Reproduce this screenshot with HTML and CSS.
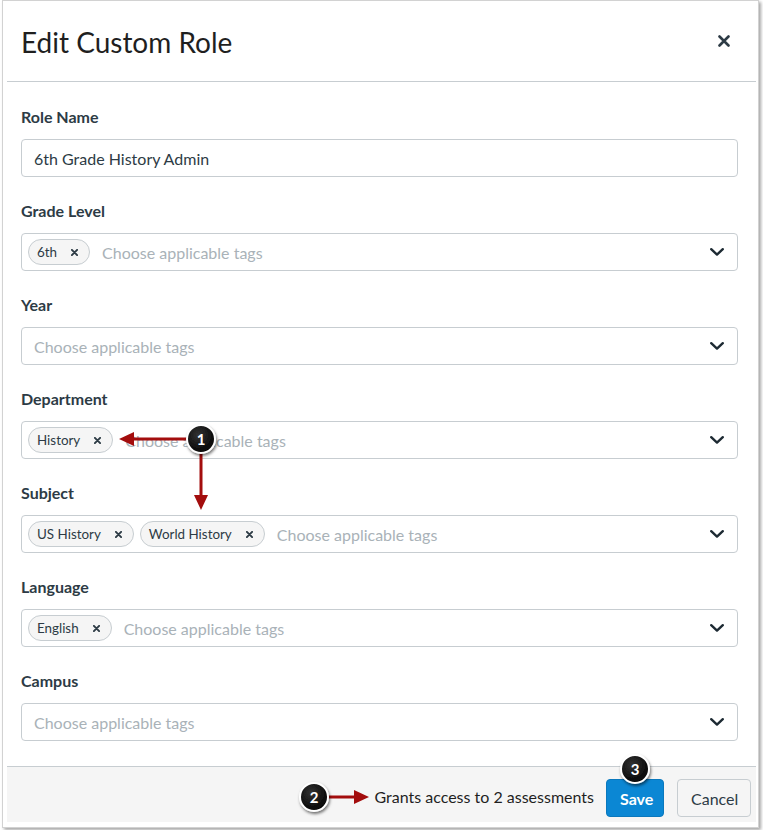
FILE: index.html
```html
<!DOCTYPE html>
<html lang="en">
<head>
<meta charset="utf-8">
<title>Edit Custom Role</title>
<link rel="stylesheet" href="styles.css">
</head>
<body>
<div class="frame">
  <header class="header">
    <h1 class="title">Edit Custom Role</h1>
    <button class="close" aria-label="Close">
      <svg width="12" height="12" viewBox="0 0 12 12"><path d="M1.5 1.5 L10.5 10.5 M10.5 1.5 L1.5 10.5" stroke="#2d3b45" stroke-width="2.6" stroke-linecap="round"/></svg>
    </button>
  </header>
  <main class="body">
    <div class="field">
      <label class="label">Role Name</label>
      <div class="input"><span class="value">6th Grade History Admin</span></div>
    </div>
    <div class="field">
      <label class="label">Grade Level</label>
      <div class="input select">
        <div class="tags">
          <span class="chip">6th<svg class="x" viewBox="0 0 8 8"><path d="M1 1L7 7M7 1L1 7"/></svg></span>
          <span class="ph">Choose applicable tags</span>
        </div>
        <svg class="chev" viewBox="0 0 14 8"><path d="M1.2 1.2 L7 6.6 L12.8 1.2"/></svg>
      </div>
    </div>
    <div class="field">
      <label class="label">Year</label>
      <div class="input select">
        <div class="tags"><span class="ph first">Choose applicable tags</span></div>
        <svg class="chev" viewBox="0 0 14 8"><path d="M1.2 1.2 L7 6.6 L12.8 1.2"/></svg>
      </div>
    </div>
    <div class="field">
      <label class="label">Department</label>
      <div class="input select">
        <div class="tags">
          <span class="chip">History<svg class="x" viewBox="0 0 8 8"><path d="M1 1L7 7M7 1L1 7"/></svg></span>
          <span class="ph">Choose applicable tags</span>
        </div>
        <svg class="chev" viewBox="0 0 14 8"><path d="M1.2 1.2 L7 6.6 L12.8 1.2"/></svg>
      </div>
    </div>
    <div class="field">
      <label class="label">Subject</label>
      <div class="input select">
        <div class="tags">
          <span class="chip">US History<svg class="x" viewBox="0 0 8 8"><path d="M1 1L7 7M7 1L1 7"/></svg></span>
          <span class="chip">World History<svg class="x" viewBox="0 0 8 8"><path d="M1 1L7 7M7 1L1 7"/></svg></span>
          <span class="ph">Choose applicable tags</span>
        </div>
        <svg class="chev" viewBox="0 0 14 8"><path d="M1.2 1.2 L7 6.6 L12.8 1.2"/></svg>
      </div>
    </div>
    <div class="field">
      <label class="label">Language</label>
      <div class="input select">
        <div class="tags">
          <span class="chip">English<svg class="x" viewBox="0 0 8 8"><path d="M1 1L7 7M7 1L1 7"/></svg></span>
          <span class="ph">Choose applicable tags</span>
        </div>
        <svg class="chev" viewBox="0 0 14 8"><path d="M1.2 1.2 L7 6.6 L12.8 1.2"/></svg>
      </div>
    </div>
    <div class="field">
      <label class="label">Campus</label>
      <div class="input select">
        <div class="tags"><span class="ph first">Choose applicable tags</span></div>
        <svg class="chev" viewBox="0 0 14 8"><path d="M1.2 1.2 L7 6.6 L12.8 1.2"/></svg>
      </div>
    </div>
  </main>
  <footer class="footer">
    <span class="grants">Grants access to 2 assessments</span>
    <button class="btn primary">Save</button>
    <button class="btn secondary">Cancel</button>
  </footer>
</div>

<svg class="annotations" width="763" height="830" viewBox="0 0 763 830">
  <defs>
    <filter id="sh" x="-50%" y="-50%" width="200%" height="200%">
      <feDropShadow dx="1" dy="2" stdDeviation="1.6" flood-color="#000" flood-opacity="0.55"/>
    </filter>
    <radialGradient id="bg" cx="40%" cy="35%" r="70%">
      <stop offset="0" stop-color="#333"/>
      <stop offset="1" stop-color="#000"/>
    </radialGradient>
  </defs>
  <g stroke="#a30d0d" stroke-width="3" fill="#a30d0d">
    <line x1="190" y1="439" x2="132" y2="439"/>
    <polygon points="119,439 134,432 134,446" stroke="none"/>
    <line x1="201" y1="450" x2="201" y2="496"/>
    <polygon points="201,510 194,495 208,495" stroke="none"/>
    <line x1="325" y1="797" x2="356" y2="797"/>
    <polygon points="369,797 354,790 354,804" stroke="none"/>
  </g>
  <g filter="url(#sh)">
    <circle cx="201" cy="439" r="14" fill="url(#bg)" stroke="#fff" stroke-width="2"/>
    <circle cx="314" cy="797" r="14" fill="url(#bg)" stroke="#fff" stroke-width="2"/>
    <circle cx="635" cy="769" r="14" fill="url(#bg)" stroke="#fff" stroke-width="2"/>
  </g>
  <g class="num">
    <text x="201" y="444.5">1</text>
    <text x="314" y="802.5">2</text>
    <text x="635" y="774.5">3</text>
  </g>
</svg>
</body>
</html>
```

FILE: styles.css
```css
* { box-sizing: border-box; }

html, body {
  margin: 0;
  padding: 0;
  background: #fff;
}

body {
  font-family: Lato, "Open Sans", Arial, sans-serif;
  color: #2d3b45;
  width: 763px;
  height: 830px;
  position: relative;
  overflow: hidden;
}

.frame {
  margin-left: 2px;
  width: 757px;
  height: 828px;
  border: 1px solid #d2d2d2;
  padding: 0 2px 5px 4px;
  box-shadow: 2px 2px 3px rgba(0, 0, 0, 0.35);
  display: flex;
  flex-direction: column;
  background: #fff;
}

.header {
  height: 81px;
  border-bottom: 1px solid #c7cdd1;
  display: flex;
  align-items: center;
  justify-content: space-between;
  padding: 0 26px 0 14px;
  flex: none;
}

.title {
  margin: 0;
  font-size: 28px;
  font-weight: 400;
  color: #1f1f1f;
  letter-spacing: 0;
  padding-top: 2px;
}

.close {
  border: 0;
  background: none;
  padding: 0;
  width: 12px;
  height: 12px;
  display: flex;
  margin-top: 0;
}

.body {
  flex: 1;
  padding: 23px 18px 25px 14px;
  display: flex;
  flex-direction: column;
  gap: 22px;
}

.field {
  display: flex;
  flex-direction: column;
}

.label {
  font-size: 16px;
  font-weight: 700;
  line-height: 24px;
  height: 24px;
  margin-bottom: 10px;
  color: #2d3b45;
}

.input {
  height: 38px;
  border: 1px solid #c7cdd1;
  border-radius: 4px;
  display: flex;
  align-items: center;
  padding: 0 12px;
  font-size: 16px;
}

.value {
  color: #2d3b45;
}

.select {
  padding: 0 13px 0 6px;
  justify-content: space-between;
}

.tags {
  display: flex;
  align-items: center;
  gap: 6px;
}

.chip {
  height: 26px;
  border: 1px solid #c7cdd1;
  background: #f5f5f5;
  border-radius: 13px;
  display: inline-flex;
  align-items: center;
  padding: 0 11px 0 8px;
  font-size: 13.4px;
  color: #2d3b45;
}

.x {
  width: 7px;
  height: 7px;
  margin-left: 14px;
  stroke: #2d3b45;
  stroke-width: 2.2;
  stroke-linecap: round;
  fill: none;
}

.ph {
  color: #a9b2b8;
  font-size: 16px;
  margin-left: 6px;
}

.ph.first {
  margin-left: 6px;
}

.chev {
  width: 14px;
  height: 8px;
  stroke: #1d2a33;
  stroke-width: 2.4;
  stroke-linecap: round;
  stroke-linejoin: round;
  fill: none;
}

.footer {
  flex: none;
  height: 56px;
  border-top: 1px solid #c7cdd1;
  background: #f5f5f5;
  display: flex;
  justify-content: flex-end;
  align-items: flex-start;
  padding: 12px 5px 0 0;
}

.grants {
  font-size: 16px;
  line-height: 36px;
  color: #1f1f1f;
  margin-right: 12px;
}

.btn {
  height: 38px;
  font-family: Lato, "Open Sans", Arial, sans-serif;
  font-size: 16px;
  border-radius: 4px;
  padding: 0 13px;
}

.primary {
  background: #0b87d4;
  border: 1px solid #0a78bd;
  color: #fff;
  font-weight: 700;
  width: 58px;
}

.secondary {
  background: #f5f5f5;
  border: 1px solid #c7cdd1;
  color: #2d3b45;
  margin-left: 13px;
  width: 74px;
}

.annotations {
  position: absolute;
  left: 0;
  top: 0;
  pointer-events: none;
}

.num text {
  fill: #fff;
  font-family: Lato, Arial, sans-serif;
  font-weight: 700;
  font-size: 15px;
  text-anchor: middle;
}
```
